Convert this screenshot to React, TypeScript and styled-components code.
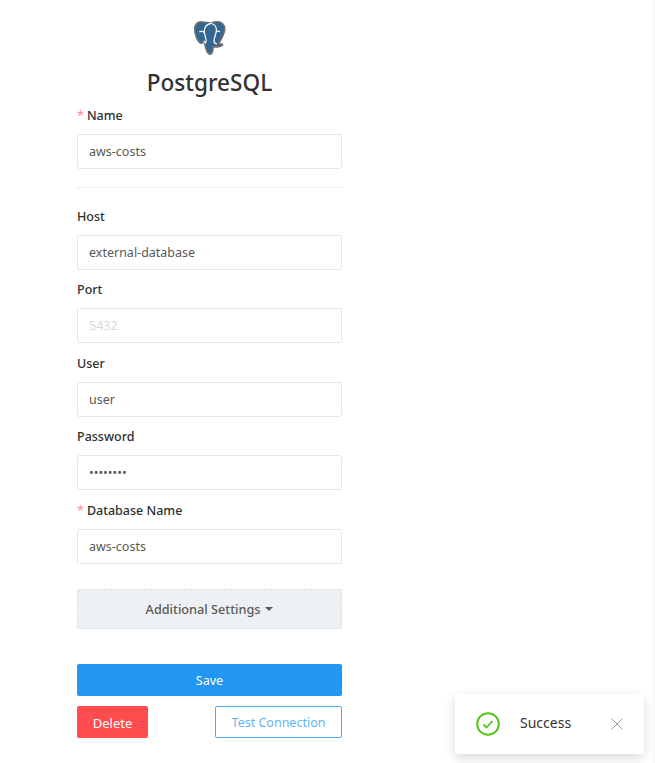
import React from 'react';
import styled, { createGlobalStyle } from 'styled-components';
import { X } from 'lucide-react';

const GlobalStyle = createGlobalStyle`
    html, body {
        margin: 0;
        padding: 0;
        height: 100%;
        overflow: hidden;
        background: #f6f8f9;
        font-family: 'Noto Sans', 'Open Sans', sans-serif;
        color: #333;
    }
`;

const Page = styled.div`
    position: relative;
    width: 653px;
    height: 763px;
    box-sizing: border-box;
    padding: 20px 0 0 77px;
    background: #ffffff;
`;

const Form = styled.form`
    display: flex;
    flex-direction: column;
    width: 265px;
`;

const Header = styled.div`
    display: flex;
    flex-direction: column;
    align-items: center;
`;

const Title = styled.h3`
    margin: 12px 0 0;
    font-size: 22.6px;
    line-height: 30px;
    font-weight: 500;
    color: #323232;
`;

const Field = styled.div<{ $top: number }>`
    display: flex;
    flex-direction: column;
    margin-top: ${(p) => p.$top}px;
`;

const Label = styled.label`
    font-size: 12.5px;
    line-height: 20px;
    font-weight: 500;
    color: #2f2f2f;
    margin-bottom: 8px;
`;

const Required = styled.span`
    color: #ff8a8f;
    font-weight: 400;
    margin-right: 3px;
`;

const Input = styled.input`
    box-sizing: border-box;
    width: 100%;
    height: 35px;
    padding: 0 11px;
    border: 1px solid #e8e8e8;
    border-radius: 2px;
    background: #fff;
    font-family: inherit;
    font-size: 12.5px;
    color: #595959;
    outline: none;
    &::placeholder {
        color: #d9d9d9;
    }
`;

const Divider = styled.hr`
    width: 100%;
    height: 1px;
    margin: 18px 0 0;
    border: 0;
    background: #eeeeee;
`;

const SettingsToggle = styled.button`
    display: flex;
    align-items: center;
    justify-content: center;
    gap: 5px;
    box-sizing: border-box;
    width: 100%;
    height: 40px;
    margin-top: 25px;
    padding: 0;
    border: 1px dashed #d9dee3;
    border-radius: 2px;
    background: #eef1f4;
    font-family: inherit;
    font-size: 12.7px;
    font-weight: 500;
    color: #595959;
`;

const Caret = styled.span`
    width: 0;
    height: 0;
    margin-top: 1px;
    border-left: 4.5px solid transparent;
    border-right: 4.5px solid transparent;
    border-top: 4.5px solid #595959;
`;

const Button = styled.button`
    box-sizing: border-box;
    height: 32px;
    padding: 2px 0 0;
    border: 0;
    border-radius: 2px;
    font-family: inherit;
    font-size: 12.5px;
    color: #fff;
    box-shadow: 0 2px 0 rgba(0, 0, 0, 0.015);
`;

const SaveButton = styled(Button)`
    width: 100%;
    margin-top: 35px;
    background: #2196f3;
`;

const ActionRow = styled.div`
    display: flex;
    justify-content: space-between;
    margin-top: 10px;
`;

const DeleteButton = styled(Button)`
    width: 71px;
    font-size: 13px;
    background: #ff4d4f;
`;

const TestButton = styled(Button)`
    width: 127px;
    background: #fff;
    border: 1px solid #4aaaf5;
    color: #5eb4f7;
`;

const Toast = styled.div`
    position: absolute;
    left: 455px;
    top: 694px;
    display: flex;
    align-items: center;
    box-sizing: border-box;
    width: 189px;
    height: 60px;
    padding: 0 17px 0 21px;
    background: #fff;
    border-radius: 2px;
    box-shadow: 0 4px 12px rgba(0, 0, 0, 0.15);
`;

const ToastText = styled.span`
    margin: -3px 0 0 20px;
    font-size: 14px;
    color: #333;
    flex: 1;
`;

const CloseIcon = styled(X)`
    color: #9a9a9a;
    flex: none;
`;

const PostgresLogo = () => (
    <svg width="34" height="36" viewBox="0 0 34 36" aria-hidden="true">
        <path
            d="M9 2C4.500 1.500 1.800 4.300 1.800 9c0 5 2.400 11.500 5 13.600 1.500 1.200 3 .3 4.200-1.400.8 2.600 1.500 5.800 2.300 8.300.9 3 2.500 5 4.500 4.400 2-.6 2.200-3 2.200-7.400 2.400.8 5.500.6 8.600-.8 1.300-.6 1.400-1.800-.2-1.700-1 .1-2.200.1-3-.2 1.700-2.600 5.800-9 6.300-14.600C31.900 5 28.500 1.900 24.500 1.900c-2.500 0-4.500.6-6.300 1.300C15.500 2.700 12 2.300 9 2z"
            fill="#336791"
            stroke="#6b6f72"
            strokeWidth="1.700"
            strokeLinejoin="round"
        />
        <path
            d="M17.500 3.500c-3.500.8-6 3.500-6.200 7.500-.2 3.500 1.600 6 1.800 9.500.1 2-.8 3.500-2 .8M18.500 3.500c3.500 1 5.200 4 4.900 7.500-.3 3.300-2.200 6-2.400 9.500-.1 1.600.4 3 2.500 3.400M11.500 12.500c-1.500-1.200-3.200-1.500-4.700-.8M23.500 11.500c1.200-.5 2.300-.4 3.200.2"
            fill="none"
            stroke="#f2f5f8"
            strokeWidth="1.300"
            strokeLinecap="round"
        />
    </svg>
);

const SuccessIcon = () => (
    <svg width="24" height="24" viewBox="0 0 24 24" aria-hidden="true">
        <circle cx="12" cy="12" r="10.800" fill="none" stroke="#52c41a" strokeWidth="2" />
        <path d="M7.500 12.500l3 3 6-6.500" fill="none" stroke="#52c41a" strokeWidth="1.800" />
    </svg>
);

const fields = [
    { label: 'Host', value: 'external-database', top: 19 },
    { label: 'Port', placeholder: '5432', top: 10.4 },
    { label: 'User', value: 'user', top: 10.4 },
    { label: 'Password', value: '••••••••', top: 10.4 },
    { label: 'Database Name', value: 'aws-costs', required: true, top: 10.4 },
];

export default function App() {
    return (
        <Page>
            <GlobalStyle />
            <Form>
                <Header>
                    <PostgresLogo />
                    <Title>PostgreSQL</Title>
                </Header>
                <Field $top={8}>
                    <Label>
                        <Required>*</Required>Name
                    </Label>
                    <Input defaultValue="aws-costs" />
                </Field>
                <Divider />
                {fields.map((f) => (
                    <Field $top={f.top} key={f.label}>
                        <Label>
                            {f.required && <Required>*</Required>}
                            {f.label}
                        </Label>
                        <Input defaultValue={f.value} placeholder={f.placeholder} />
                    </Field>
                ))}
                <SettingsToggle type="button">
                    Additional Settings <Caret />
                </SettingsToggle>
                <SaveButton type="button">Save</SaveButton>
                <ActionRow>
                    <DeleteButton type="button">Delete</DeleteButton>
                    <TestButton type="button">Test Connection</TestButton>
                </ActionRow>
            </Form>
            <Toast>
                <SuccessIcon />
                <ToastText>Success</ToastText>
                <CloseIcon size={20} strokeWidth={1.200} />
            </Toast>
        </Page>
    );
}
